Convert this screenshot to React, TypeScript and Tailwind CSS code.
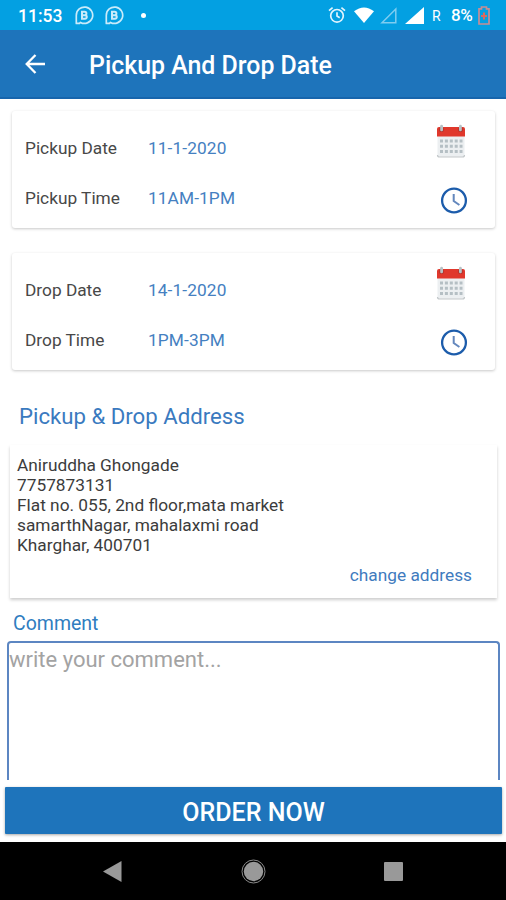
import { useState } from "react";

const ChatIcon = () => (
  <svg width="19" height="19" viewBox="0 0 19 19" fill="none" stroke="#c9ebfa">
    <path d="M1.300 17.400V9.200a8.200 8.200 0 1 1 4.200 7.200l-1 1z" strokeWidth="1.700" strokeLinejoin="round" />
    <path d="M7 5.800h2.700a1.700 1.700 0 0 1 0 3.400H7zM7 9.200h3a1.800 1.800 0 0 1 0 3.600H7z" strokeWidth="2" />
  </svg>
);

const CalendarIcon = () => (
  <svg width="30" height="35" viewBox="0 0 30 35">
    <path d="M1.500 11h27v20a2 2 0 0 1-2 2h-23a2 2 0 0 1-2-2z" fill="#eceff1" />
    <path d="M1.500 31a2 2 0 0 0 2 2h23a2 2 0 0 0 2-2" fill="none" stroke="#c3c8ca" strokeWidth="1.200" />
    <path d="M1 5a2 2 0 0 1 2-2h24a2 2 0 0 1 2 2v7.500H1z" fill="#e0382c" />
    <g fill="#b9352d">
      <circle cx="5.500" cy="5.500" r="2.600" />
      <circle cx="24.500" cy="5.500" r="2.600" />
    </g>
    <g fill="#b8c1c5">
      <rect x="4.200" y="0.800" width="2.800" height="6.500" rx="1.400" />
      <rect x="23" y="0.800" width="2.800" height="6.500" rx="1.400" />
    </g>
    <g fill="none" stroke="#b5bfc4" strokeWidth="3" strokeDasharray="3 1.900">
      <path d="M4 17h22.500M4 22.200h22.500M4 27.400h22.500" />
    </g>
  </svg>
);

const ClockIcon = () => (
  <svg width="28" height="28" viewBox="0 0 28 28" fill="none">
    <circle cx="14" cy="14.500" r="11.900" stroke="#1c5cab" strokeWidth="2.300" />
    <path d="M13.700 8v7l5.700 4" stroke="#6387bd" strokeWidth="2" />
  </svg>
);

type SlotProps = {
  name: string;
  date: string;
  time: string;
};

const SlotCard = ({ name, date, time }: SlotProps) => (
  <div className="ml-3 mr-[11px] h-[117px] flex justify-between rounded-[3px] bg-white pl-[13px] pr-[27px] shadow-[0_1px_3px_rgba(0,0,0,0.22)]">
    <div className="grid grid-cols-[123px_1fr] auto-rows-[50px] content-start items-center pt-[13px] text-[17.300px]">
      <span className="text-[#484848]">{name} Date</span>
      <span className="tracking-[0.100px] text-[#4580c1]">{date}</span>
      <span className="text-[#484848]">{name} Time</span>
      <span className="tracking-[0.100px] text-[#4580c1]">{time}</span>
    </div>
    <div className="flex flex-col items-end pt-[13px]">
      <button type="button" className="mr-[2px]"><CalendarIcon /></button>
      <button type="button" className="mt-[27px]"><ClockIcon /></button>
    </div>
  </div>
);

const App = () => {
  const [comment, setComment] = useState("");

  return (
    <div className="w-[506px] h-[900px] flex flex-col overflow-hidden bg-white font-['Roboto',sans-serif]">
      {/* Status bar */}
      <div className="h-[30px] shrink-0 flex items-center justify-between bg-[#03a0e2] pl-[18px] pr-[16px] text-white">
        <div className="flex items-center pt-px">
          <span className="w-[57px] pt-px text-[17.500px] font-medium">11:53</span>
          <ChatIcon />
          <span className="w-[11px]" />
          <ChatIcon />
          <span className="ml-[17px] w-[5px] h-[5px] rounded-full bg-white" />
        </div>
        <div className="flex items-center">
          <svg width="18" height="18" viewBox="0 0 18 18" fill="none" stroke="#e2f4fd" strokeWidth="1.700">
            <circle cx="9" cy="9.800" r="6.300" />
            <path d="M9 6.300v3.800l2.700 1.600M1 4.600l3.600-3M17 4.600l-3.600-3" />
          </svg>
          <svg className="ml-2" width="20" height="16" viewBox="0 0 20 16">
            <path d="M0 4.300Q10-3.300 20 4.300L10 16z" fill="#fff" />
          </svg>
          <svg className="ml-[6px]" width="17" height="17" viewBox="0 0 17 17">
            <path d="M2 15.700L15.800 2v13.700z" fill="none" stroke="#7fcdf0" strokeWidth="1.500" />
          </svg>
          <svg className="ml-[8px]" width="19" height="17" viewBox="0 0 19 17">
            <path d="M0 17L19 0v17z" fill="#fff" />
          </svg>
          <span className="ml-[8px] w-[19px] pt-[2px] text-[14px]">R</span>
          <span className="w-[27px] pt-[2px] text-[17px] font-medium tracking-[-0.500px]">8%</span>
          <svg width="12" height="19" viewBox="0 0 12 19" fill="none">
            <path d="M3.500 2.800V1h5v1.800H11V18H1V2.800z" stroke="#c68d94" strokeWidth="1.700" />
            <path d="M6 6.500v7M3 10h6" stroke="#d9695f" strokeWidth="2" />
          </svg>
        </div>
      </div>

      {/* App bar */}
      <header className="h-[69px] shrink-0 flex items-center border-b-2 border-[#1765ac] bg-[#1e74bb] pl-[25px] text-white">
        <svg className="mt-px" width="20" height="20" viewBox="0 0 20 20" fill="none" stroke="#fff" strokeWidth="2.300">
          <path d="M10.500 1L1.700 10l8.800 9M2 10h18" />
        </svg>
        <h1 className="ml-[44px] pt-[5px] text-[24.900px] font-medium">Pickup And Drop Date</h1>
      </header>

      <main className="h-[743px] shrink-0 flex flex-col pt-3">
        <SlotCard name="Pickup" date="11-1-2020" time="11AM-1PM" />
        <div className="h-[25px] shrink-0" />
        <SlotCard name="Drop" date="14-1-2020" time="1PM-3PM" />

        <h2 className="mt-[30px] h-[32px] pl-[19px] text-[22.200px] leading-8 text-[#3a7abf]">Pickup &amp; Drop Address</h2>
        <section className="mt-[13px] ml-[10px] mr-[9px] h-[153px] flex flex-col justify-between bg-white pl-[7px] pr-[25px] pt-[10px] pb-[13px] text-[17.300px] shadow-[0_2px_3px_rgba(0,0,0,0.2)]">
          <p className="leading-5 text-[#3c3c3c]">
            Aniruddha Ghongade<br />
            7757873131<br />
            Flat no. 055, 2nd floor,mata market<br />
            samarthNagar, mahalaxmi road<br />
            Kharghar, 400701
          </p>
          <a href="#" className="self-end leading-5 text-[#3f7bbe]">change address</a>
        </section>

        <label htmlFor="comment" className="mt-[12px] h-[28px] pl-[13px] text-[19.500px] leading-7 text-[#2f7dbf]">Comment</label>
        <textarea
          id="comment"
          value={comment}
          onChange={(e) => setComment(e.target.value)}
          placeholder="write your comment..."
          className="mt-[3px] ml-[7px] mr-[6px] h-[139px] resize-none rounded-t-[4px] border-2 border-b-0 border-[#5c86c2] pt-[3px] text-[22px] leading-7 placeholder-[#a3a3a3] outline-none"
        />
        <button type="button" className="mt-[7px] ml-[5px] mr-[4px] h-[47px] pt-[4px] rounded-[1px] bg-[#1e74bb] text-[25px] font-medium text-white shadow-[0_1px_3px_rgba(0,0,0,0.35)]">
          ORDER NOW
        </button>
      </main>

      {/* System navigation */}
      <nav className="flex-1 flex items-center bg-black pl-[103px]">
        <svg width="19" height="21" viewBox="0 0 19 21"><path d="M18.500 0v21L0 10.500z" fill="#999" /></svg>
        <svg className="ml-[119px]" width="25" height="25" viewBox="0 0 25 25">
          <circle cx="12.500" cy="12.500" r="11.500" fill="none" stroke="#8b8b8b" />
          <circle cx="12.500" cy="12.500" r="9.700" fill="#999" />
        </svg>
        <span className="ml-[118px] w-[19px] h-[19px] rounded-[1px] bg-[#999]" />
      </nav>
    </div>
  );
};

export default App;
